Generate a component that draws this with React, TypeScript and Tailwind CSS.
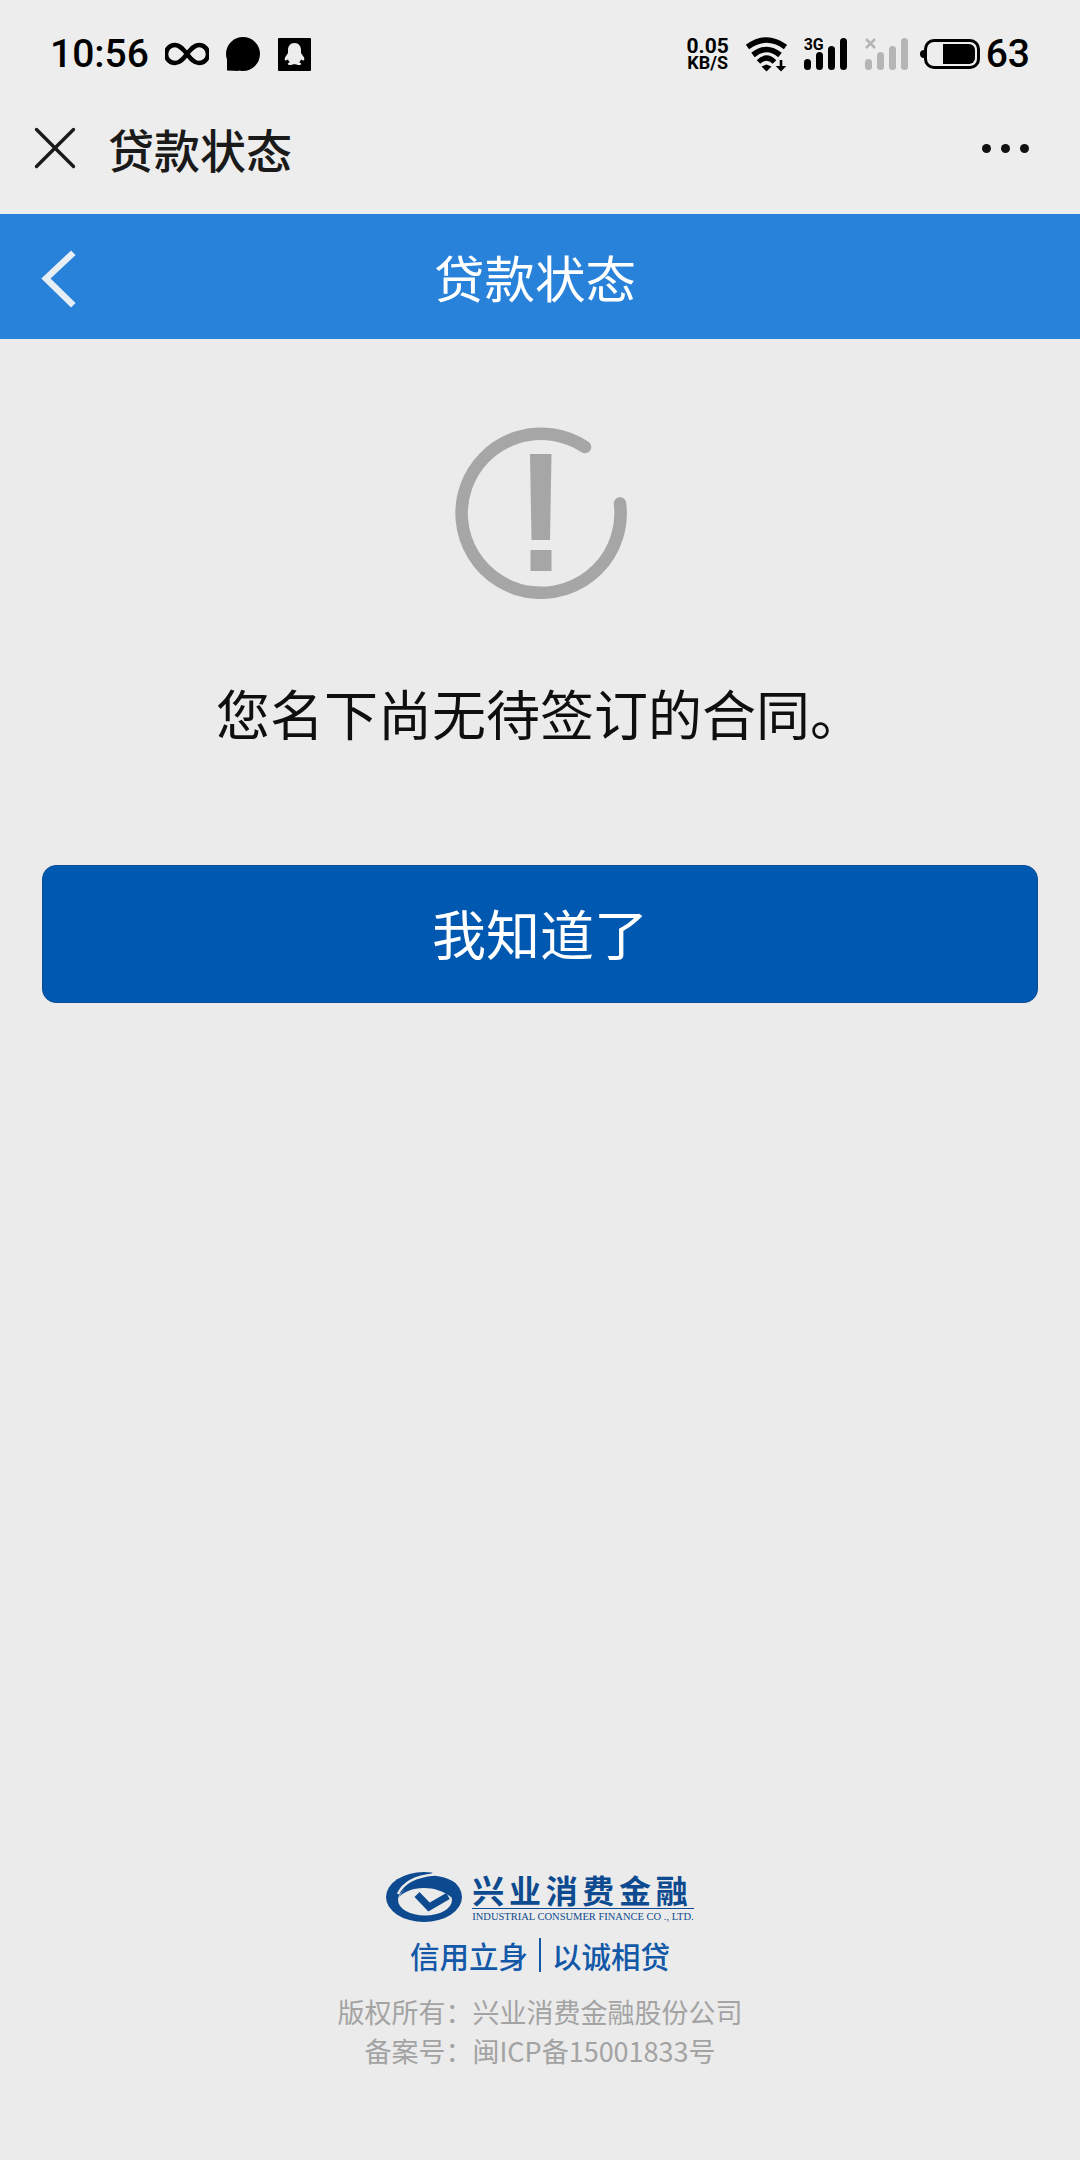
import { X } from 'lucide-react';

const sans = 'font-["Noto_Sans_CJK_SC","Noto_Sans",sans-serif]';

function InfinityIcon() {
  return (
    <svg width="44" height="24" viewBox="0 0 44 24" fill="none" stroke="#000" strokeWidth="4.500">
      <path d="M22 12c-4-5-7-9-12-9a9 9 0 0 0 0 18c5 0 8-4 12-9s7-9 12-9a9 9 0 0 1 0 18c-5 0-8-4-12-9z" />
    </svg>
  );
}

function ChatIcon() {
  return (
    <svg width="35" height="35" viewBox="0 0 35 35">
      <circle cx="18" cy="17" r="17" fill="#000" />
      <path d="M2 22l0 11.500 12 .500z" fill="#000" />
    </svg>
  );
}

function QqIcon() {
  return (
    <svg width="33" height="33" viewBox="0 0 33 33">
      <rect width="33" height="33" rx="1" fill="#000" />
      <path
        d="M16.500 5c-4.500 0-6.500 3.500-6.500 7v3l-3 4.500c-.8 2 0 3.500 1 3l2-1c.3 1.200 1 2 1.800 2.800-1.500.5-2.300 1.200-2 2 .3.700 2.500.9 4.200.5.800-.4 1.200-.5 2.500-.5s1.700.1 2.500.5c1.700.4 3.900.2 4.200-.5.300-.8-.5-1.500-2-2 .8-.8 1.500-1.600 1.800-2.800l2 1c1 .5 1.800-1 1-3l-3-4.500v-3c0-3.500-2-7-6.500-7z"
        fill="#ededed"
      />
    </svg>
  );
}

function WifiIcon() {
  return (
    <svg width="42" height="35" viewBox="0 0 42 35" fill="none">
      <path d="M2.500 10Q21.500 -4 40.500 10" stroke="#000" strokeWidth="5.500" />
      <path d="M8 18Q21.500 7 35 18" stroke="#000" strokeWidth="5.500" />
      <path d="M13.500 25Q21.500 17 29.500 25" stroke="#000" strokeWidth="5" />
      <path d="M16.500 29.500l5-2 5 2-5 5z" fill="#000" />
      <path d="M34.700 23h2.600v6h4l-5.300 5.500-5.300-5.500h4z" fill="#000" />
    </svg>
  );
}

function SignalBars({ color }: { color: string }) {
  const bars = [
    { x: 0, y: 21, h: 11 },
    { x: 12, y: 14, h: 18 },
    { x: 24, y: 8, h: 24 },
    { x: 36, y: 0, h: 32 },
  ];
  return (
    <svg width="43" height="32" viewBox="0 0 43 32">
      {bars.map((b) => (
        <rect key={b.x} x={b.x} y={b.y} width="7" height={b.h} rx="3.500" fill={color} />
      ))}
    </svg>
  );
}

function StatusBar() {
  return (
    <div className="flex h-[106px] items-center justify-between pt-[2px] pr-[50px] pl-[50px] text-black">
      <div className="flex items-center">
        <span className="font-['Roboto',sans-serif] text-[39px] leading-none font-medium">10:56</span>
        <span className="ml-[16px] flex"><InfinityIcon /></span>
        <span className="ml-[16px] flex"><ChatIcon /></span>
        <span className="ml-[18px] flex"><QqIcon /></span>
      </div>
      <div className="flex items-center">
        <div className="flex w-[42px] flex-col items-center font-['Roboto',sans-serif] leading-none font-bold">
          <span className="text-[21px] leading-[18px]">0.05</span>
          <span className="text-[18px] leading-[16px]">KB/S</span>
        </div>
        <span className="ml-[16px] flex"><WifiIcon /></span>
        <div className="relative ml-[17px] h-[32px] w-[43px]">
          <SignalBars color="#000" />
          <span className="absolute top-[-1px] left-0 font-['Roboto',sans-serif] text-[16px] leading-none font-bold">3G</span>
        </div>
        <div className="relative ml-[18px] h-[32px] w-[43px]">
          <SignalBars color="#b5b5b5" />
          <svg className="absolute top-0 left-0" width="11" height="11" viewBox="0 0 11 11" stroke="#b5b5b5" strokeWidth="2.500">
            <path d="M1 1l9 9M10 1l-9 9" />
          </svg>
        </div>
        <div className="relative ml-[16px] h-[30px] w-[56px] rounded-[10px] border-[3px] border-black">
          <div className="absolute top-[2px] right-[2px] bottom-[2px] w-[32px] rounded-r-[6px] bg-black" />
          <div className="absolute top-[8px] left-[-7px] h-[8px] w-[4px] rounded-l-full bg-black" />
        </div>
        <span className="ml-[6px] font-['Roboto',sans-serif] text-[39px] leading-none font-medium">63</span>
      </div>
    </div>
  );
}

function TitleBar() {
  return (
    <div className="flex h-[108px] items-center pr-[51px] pb-[24px] pl-[18px]">
      <X size={74} strokeWidth={1.100} color="#1a1a1a" />
      <span className="ml-[16px] text-[46px] leading-none font-medium text-[#1a1a1a]">贷款状态</span>
      <div className="ml-auto flex gap-[10px]">
        <span className="h-[9px] w-[9px] rounded-full bg-[#111]" />
        <span className="h-[9px] w-[9px] rounded-full bg-[#111]" />
        <span className="h-[9px] w-[9px] rounded-full bg-[#111]" />
      </div>
    </div>
  );
}

function BlueHeader() {
  return (
    <div className="relative flex h-[125px] items-center justify-center bg-[#2882da] pr-[10px]">
      <svg className="absolute top-[36px] left-[41px]" width="36" height="58" viewBox="0 0 36 58" fill="none" stroke="#e8eef5" strokeWidth="6.500" strokeLinecap="square">
        <path d="M30 5L5 28.500 30 53" />
      </svg>
      <span className="text-[50.500px] leading-none text-white">贷款状态</span>
    </div>
  );
}

function WarnIcon() {
  return (
    <svg className="ml-[2px]" width="172" height="172" viewBox="0 0 172 172" fill="none">
      <path d="M165 76.500A79.500 79.500 0 1 1 130 20" stroke="#a6a6a6" strokeWidth="12.500" strokeLinecap="round" />
      <path d="M75 27h21.500l-1.500 86H76.500z" fill="#a6a6a6" />
      <rect x="75.500" y="123" width="21" height="21" fill="#a6a6a6" />
    </svg>
  );
}

function Logo() {
  return (
    <div className="flex items-center">
      <svg width="76" height="50" viewBox="0 0 76 50" fill="none">
        <ellipse cx="38" cy="25" rx="38" ry="25" fill="#0d4a8f" />
        <path d="M12 22C18 9 32 4 48 2.500" stroke="#ebebeb" strokeWidth="2.500" />
        <path d="M48 -1H76V16C68 8 58 4 44 3.500z" fill="#ebebeb" />
        <ellipse cx="39" cy="28" rx="27" ry="15.500" fill="#ebebeb" />
        <path d="M13 25C20 12 34 8 46 8 56 8 62 14 66 26 58 19 48 16 38 16 26 16 18 20 13 25z" fill="#0d4a8f" />
        <path d="M31 22.500L43 35 62 24" stroke="#0d4a8f" strokeWidth="7" />
      </svg>
      <div className="ml-[10px] flex flex-col">
        <span className="border-b-[1.500px] border-[#0d4a8f] text-[32px] leading-[37px] font-bold tracking-[4.700px] whitespace-nowrap text-[#0d4a8f]">
          兴业消费金融
        </span>
        <span className="mt-[2px] font-['Liberation_Serif',serif] text-[10.500px] leading-[12px] whitespace-nowrap text-[#0d4a8f]">
          INDUSTRIAL CONSUMER FINANCE CO ., LTD.
        </span>
      </div>
    </div>
  );
}

export default function App() {
  return (
    <main className={`flex h-[2160px] w-[1080px] flex-col overflow-hidden bg-[#ebebeb] ${sans}`}>
      <div className="bg-[#ededed]">
        <StatusBar />
        <TitleBar />
      </div>
      <BlueHeader />
      <div className="flex flex-1 flex-col items-center">
        <div className="mt-[88px] flex"><WarnIcon /></div>
        <p className="mt-[74px] text-[54px] leading-[80px] text-[#0f0f0f]">您名下尚无待签订的合同。</p>
        <button className="mt-[112px] flex h-[138px] w-[996px] items-center justify-center rounded-[14px] border border-[#0a4e98] bg-[#0058b0] pb-[3px] text-[54px] text-white">
          我知道了
        </button>
        <div className="mt-auto flex flex-col items-center pb-[90px]">
          <Logo />
          <div className="mt-[12px] flex items-center text-[29.500px] leading-[40px] font-medium text-[#1359a8]">
            <span>信用立身</span>
            <span className="mx-[11px] h-[34px] w-[2px] bg-[#1359a8]" />
            <span>以诚相贷</span>
          </div>
          <p className="mt-[17px] text-[27px] leading-[39px] text-[#a3a3a3]">版权所有：兴业消费金融股份公司</p>
          <p className="text-[27px] leading-[39px] text-[#a3a3a3]">备案号：闽ICP备15001833号</p>
        </div>
      </div>
    </main>
  );
}
